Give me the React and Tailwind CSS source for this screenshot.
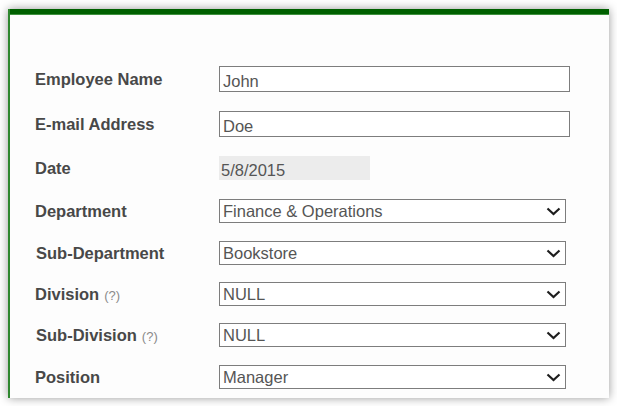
import React from 'react';

const font = "font-['Liberation_Sans',Arial,sans-serif]";

const Chevron = () => (
  <svg width="15" height="9" viewBox="0 0 15 9" className="shrink-0">
    <path d="M1.5 1.5 L7.5 7 L13.5 1.5" fill="none" stroke="#1e1e1e" strokeWidth="2.2" />
  </svg>
);

const Label = ({ children, hint, className = '' }) => (
  <div className={`w-[184px] shrink-0 flex items-baseline text-[16.5px] font-bold text-[#484848] ${className}`}>
    <span>{children}</span>
    {hint && <span className="ml-[5px] text-[13px] font-normal text-[#8a8a8a]">(?)</span>}
  </div>
);

const TextBox = ({ value }) => (
  <div className="w-[351px] h-[26px] border border-[#7d7d7d] bg-white flex items-center pl-[3px] pt-[5px] text-[16.5px] text-[#555]">
    {value}
  </div>
);

const SelectBox = ({ value }) => (
  <div className="w-[347px] h-[24px] border border-[#7d7d7d] bg-white flex items-center justify-between pl-[3px] pr-[4px] text-[16.5px] text-[#555]">
    <span>{value}</span>
    <Chevron />
  </div>
);

export default function App() {
  return (
    <div className={`w-[617px] h-[406px] bg-white pt-[9px] pl-[8px] ${font}`}>
      <div className="w-[601px] h-[389px] bg-[#fdfdfd] shadow-[0_0_9px_rgba(0,0,0,0.4)] flex flex-col border-l-2 border-[#2f872f]">
        <div className="h-[6px] bg-[#006000] border-b border-[#3f913f]" />
        <div className="flex flex-col pl-[25px] pt-[51px]">
          <div className="flex items-center h-[26px]">
            <Label>Employee Name</Label>
            <TextBox value="John" />
          </div>

          <div className="flex items-center h-[26px] mt-[19px]">
            <Label>E-mail Address</Label>
            <TextBox value="Doe" />
          </div>

          <div className="flex items-center h-[24px] mt-[19px]">
            <Label>Date</Label>
            <div className="w-[151px] h-[24px] bg-[#ececec] flex items-center pl-[2px] pt-[4px] text-[16.5px] text-[#555]">
              5/8/2015
            </div>
          </div>

          <div className="flex items-center h-[24px] mt-[19px]">
            <Label>Department</Label>
            <SelectBox value="Finance & Operations" />
          </div>

          <div className="flex items-center h-[24px] mt-[18px]">
            <Label className="pl-[1px]">Sub-Department</Label>
            <SelectBox value="Bookstore" />
          </div>

          <div className="flex items-center h-[24px] mt-[17px]">
            <Label hint>Division</Label>
            <SelectBox value="NULL" />
          </div>

          <div className="flex items-center h-[24px] mt-[17px]">
            <Label hint className="pl-[1px]">Sub-Division</Label>
            <SelectBox value="NULL" />
          </div>

          <div className="flex items-center h-[24px] mt-[18px]">
            <Label>Position</Label>
            <SelectBox value="Manager" />
          </div>
        </div>
      </div>
    </div>
  );
}
